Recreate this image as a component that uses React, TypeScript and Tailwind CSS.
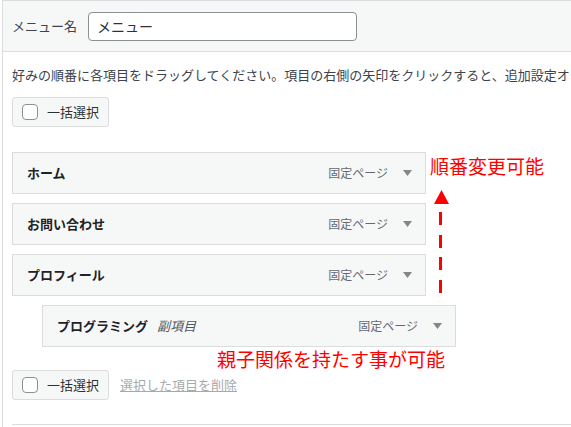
import React from "react";

type Item = { title: string; sub?: string; depth: number };

const items: Item[] = [
  { title: "ホーム", depth: 0 },
  { title: "お問い合わせ", depth: 0 },
  { title: "プロフィール", depth: 0 },
  { title: "プログラミング", sub: "副項目", depth: 1 },
];

const Caret = () => (
  <svg width="9" height="6" viewBox="0 0 9 6" className="shrink-0">
    <path d="M0 0h9L4.5 6z" fill="#82878c" />
  </svg>
);

const BulkSelect = () => (
  <button className="flex h-[30px] w-[97px] items-center gap-[9px] rounded-[3px] border border-[#dcdcde] bg-[#f6f7f7] pl-[9px] text-[13px] text-[#2c3338]">
    <span className="h-[16px] w-[16px] rounded-[4px] border border-[#8c8f94] bg-white" />
    一括選択
  </button>
);

const MenuItem = ({ title, sub, depth }: Item) => (
  <div
    className={`flex h-[42px] w-[414px] items-center justify-between border border-[#dcdcde] bg-[#f6f7f7] pl-[14px] pr-[13px] ${
      depth === 1 ? "ml-[30px]" : ""
    }`}
  >
    <div className="flex items-center gap-[9px]">
      <span className="text-[13px] font-bold text-[#1d2327]">{title}</span>
      {sub ? <span className="text-[13px] italic text-[#50575e]">{sub}</span> : null}
    </div>
    <div className="flex items-center gap-[15px]">
      <span className="text-[12px] text-[#646970]">固定ページ</span>
      <Caret />
    </div>
  </div>
);

export default function App() {
  return (
    <div
      className="relative h-[427px] w-[571px] overflow-hidden bg-white"
      style={{ fontFamily: '"Noto Sans CJK JP", "Noto Sans", sans-serif' }}
    >
      <div className="ml-[2px] h-full border-l border-t border-[#dcdcde]">
        {/* header */}
        <div className="flex h-[51px] items-center gap-[11px] border-b border-[#dcdcde] bg-[#f6f7f7] pl-[9px]">
          <span className="text-[13px] text-[#3c434a]">メニュー名</span>
          <div className="flex h-[29px] w-[269px] items-center rounded-[4px] border border-[#8c8f94] bg-white pl-[8px] text-[14px] text-[#2c3338]">
            メニュー
          </div>
        </div>

        {/* body */}
        <div className="pl-[9px] pt-[13px]">
          <p className="whitespace-nowrap text-[13px] leading-[20px] text-[#3c434a]">
            好みの順番に各項目をドラッグしてください。項目の右側の矢印をクリックすると、追加設定オプションを表示します。
          </p>
          <div className="mt-[12px]">
            <BulkSelect />
          </div>
          <div className="mt-[25px] flex flex-col gap-[9px]">
            {items.map((it) => (
              <MenuItem key={it.title} {...it} />
            ))}
          </div>
          <div className="mt-[23px] flex items-center gap-[11px]">
            <BulkSelect />
            <span className="text-[13px] text-[#a7aaad] underline">選択した項目を削除</span>
          </div>
          <div className="mt-[24px] border-t border-[#dcdcde]" />
        </div>
      </div>

      {/* annotations */}
      <span className="absolute left-[430px] top-[155px] text-[19px] leading-[22px] text-[#ff0000]">
        順番変更可能
      </span>
      <svg className="absolute left-[433px] top-[190px]" width="17" height="105" viewBox="0 0 17 105">
        <path d="M1 14L8.5 0L16 14z" fill="#ff0000" />
        <rect x="6" y="22" width="3" height="13" fill="#ff0000" />
        <rect x="6" y="45" width="3" height="13" fill="#ff0000" />
        <rect x="6" y="67" width="3" height="13" fill="#ff0000" />
        <rect x="6" y="90" width="3" height="13" fill="#ff0000" />
      </svg>
      <span className="absolute left-[217px] top-[348px] text-[19px] leading-[22px] text-[#ff0000]">
        親子関係を持たす事が可能
      </span>
    </div>
  );
}
